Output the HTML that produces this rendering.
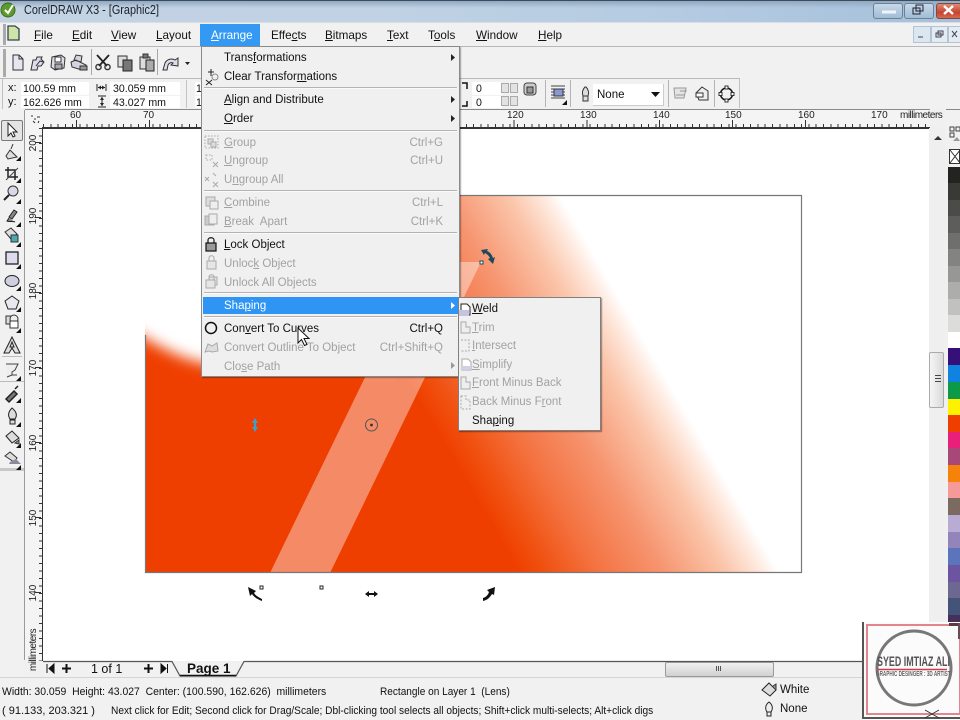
<!DOCTYPE html>
<html><head><meta charset="utf-8"><title>CorelDRAW X3</title>
<style>
html,body{margin:0;padding:0;background:#fff}
#r{position:relative;width:960px;height:720px;overflow:hidden;background:#f0f0f0;font:11.7px/14px "Liberation Sans",sans-serif;color:#111;filter:blur(.35px)}
#r div,#r span.a{position:absolute}
.t{position:absolute;white-space:pre}
.m{font-size:11.5px;line-height:14px;margin-top:1px}
.g{color:#a2a2a2}
.sep{height:1px;background:#b4b4b4;border-bottom:1px solid #fafafa}
.rn{font-size:10px;line-height:12px;color:#222;position:absolute;white-space:pre}
.v{transform:rotate(-90deg);transform-origin:center}
.p{font-size:10.6px}
svg{position:absolute;left:0;top:0}
u{text-underline-offset:1px}
</style></head><body><div id="r">

<!-- canvas -->
<div style="left:42px;top:128px;width:888px;height:533px;background:#fff"></div>
<svg width="960" height="720" viewBox="0 0 960 720">
<defs>
<linearGradient id="gr" gradientUnits="userSpaceOnUse" x1="520" y1="573" x2="714" y2="460">
<stop offset="0" stop-color="#ef3f00"/><stop offset=".1" stop-color="#f0500f"/><stop offset=".3" stop-color="#f47240"/><stop offset=".55" stop-color="#f6946f"/><stop offset=".8" stop-color="#fbc6ab"/><stop offset=".93" stop-color="#fee9de"/><stop offset="1" stop-color="#fff"/>
</linearGradient>
<filter id="bl" x="-20%" y="-20%" width="140%" height="140%"><feGaussianBlur stdDeviation="7"/></filter>
<clipPath id="lc"><rect x="145" y="195" width="250" height="378"/></clipPath>
</defs>
<rect x="145" y="195" width="657" height="378" fill="url(#gr)"/>
<g clip-path="url(#lc)"><path d="M100 150V312C150 340 175 360 215 365H420V150Z" fill="#fff" filter="url(#bl)"/></g>
<polygon points="270,573 330,573 481,262 421,262" fill="#fff" opacity=".4"/>
<path d="M145.500 335V572.500H801.500V195.500H400" fill="none" stroke="#777" stroke-width="1.200"/>
<!-- handles -->
<circle cx="371.500" cy="425" r="6" fill="none" stroke="#555" stroke-width="1"/><circle cx="371.500" cy="425" r="1.400" fill="#333"/>
<path d="M255 418l-3 5h6zM255 432l-3-5h6z" fill="#3aa0c8"/><rect x="254" y="422" width="2" height="6" fill="#3aa0c8"/>
<rect x="260" y="586" width="3" height="3" fill="#fff" stroke="#222"/><rect x="320" y="586" width="3" height="3" fill="#fff" stroke="#222"/>
<rect x="480" y="261" width="3" height="3" fill="#fff" stroke="#1c4a5c"/>
<path d="M248 587l2 9 2-2c2 3 5 5 10 7l0-2c-4-2-7-4-8-6l2-2z" fill="#111"/>
<path d="M495 587l-8 3 2 2c-1 3-3 5-6 6l0 3c5-1 7-4 9-7l2 1z" fill="#111"/>
<path d="M365 594l4-3v2h5v-2l4 3-4 3v-2h-5v2z" fill="#111"/>
<path d="M481 250l7-1-1 2c3 1 5 4 6 7l2-1-2 7-5-5 2-1c-1-2-3-4-5-5l-1 2z" fill="#1c4a5c"/>
</svg>

<!-- title bar -->
<div style="left:0;top:0;width:960px;height:22px;background:linear-gradient(90deg,#c3d3e3 0,#c0d2e4 40%,#b4cbe2 70%,#a6c0da 100%)"></div>
<div style="left:0;top:0;width:960px;height:1px;background:#3c4c5c"></div>
<div style="left:0;top:1px;width:960px;height:7px;background:linear-gradient(#90a8c0,rgba(170,195,220,0))"></div>
<span class="t" style="left:24px;top:3px;font-size:12.5px;line-height:15px;color:#1a2028;transform-origin:left top;transform:scaleX(.87)">CorelDRAW X3 - [Graphic2]</span>
<div style="left:873px;top:3px;width:28px;height:14px;background:linear-gradient(#c8d8e8,#a0bcd6);border:1px solid #6d8196;border-radius:3px"></div>
<div style="left:904px;top:3px;width:28px;height:14px;background:linear-gradient(#c8d8e8,#a0bcd6);border:1px solid #6d8196;border-radius:3px"></div>
<div style="left:936px;top:3px;width:26px;height:14px;background:linear-gradient(#dc8a78,#c8432e 60%,#d46a50);border:1px solid #7c4a44;border-radius:3px"></div>
<div style="left:0;top:22px;width:960px;height:24px;background:#f1f1f1"></div>
<div style="left:0;top:46px;width:960px;height:1px;background:#b8b8b8"></div>
<div style="left:3px;top:24px;width:3px;height:21px;background:#aaa"></div>
<div style="left:0;top:22px;width:960px;height:1px;background:#d8dee4"></div>
<svg width="960" height="720" fill="none">
<path d="M882 12h14" stroke="#eef4fa" stroke-width="3"/><rect x="913" y="8" width="7" height="6" stroke="#223" /><rect x="916" y="5" width="7" height="6" stroke="#223"/>
<path d="M944 6l9 8M953 6l-9 8" stroke="#fff" stroke-width="2.500"/>
</svg>

<!-- MDI -->
<div style="left:913px;top:26px;width:16px;height:15px;background:#dbe6f0;border:1px solid #b3c4d4"></div>
<div style="left:931px;top:26px;width:15px;height:15px;background:#e4ecf3;border:1px solid #b3c4d4"></div>
<div style="left:948px;top:26px;width:14px;height:15px;background:#e4ecf3;border:1px solid #b3c4d4"></div>
<svg width="960" height="720" fill="none" stroke="#445"><path d="M918 37h5"/><rect x="936" y="33" width="5" height="4"/><rect x="938" y="31" width="5" height="4"/><path d="M952 31l5 6M957 31l-5 6"/></svg>

<!-- menu bar -->
<div style="left:200px;top:24px;width:60px;height:22px;background:#3399f3"></div>
<span class="t" style="left:34px;top:29px"><u>F</u>ile</span>
<span class="t" style="left:72px;top:29px"><u>E</u>dit</span>
<span class="t" style="left:111px;top:29px"><u>V</u>iew</span>
<span class="t" style="left:156px;top:29px"><u>L</u>ayout</span>
<span class="t" style="left:211px;top:29px;color:#fff"><u>A</u>rrange</span>
<span class="t" style="left:271px;top:29px">Effe<u>c</u>ts</span>
<span class="t" style="left:325px;top:29px"><u>B</u>itmaps</span>
<span class="t" style="left:387px;top:29px"><u>T</u>ext</span>
<span class="t" style="left:428px;top:29px">T<u>o</u>ols</span>
<span class="t" style="left:476px;top:29px"><u>W</u>indow</span>
<span class="t" style="left:538px;top:29px"><u>H</u>elp</span>

<!-- toolbar rows -->
<div style="left:0;top:47px;width:960px;height:32px;background:#f1f1f1"></div>
<div style="left:0;top:78px;width:740px;height:1px;background:#b9b9b9"></div>
<div style="left:0;top:79px;width:960px;height:30px;background:#f1f1f1"></div>
<div style="left:3px;top:49px;width:3px;height:28px;background:#aaa"></div>
<div style="left:91px;top:49px;width:1px;height:26px;background:#a8a8a8"></div>
<div style="left:157px;top:49px;width:1px;height:26px;background:#a8a8a8"></div>
<div style="left:2px;top:79px;width:1px;height:30px;background:#c0c0c0"></div>
<div style="left:21px;top:82px;width:68px;height:13px;background:#fff"></div>
<div style="left:21px;top:96px;width:68px;height:12px;background:#fff"></div>
<div style="left:110px;top:82px;width:70px;height:13px;background:#fff"></div>
<div style="left:110px;top:96px;width:70px;height:12px;background:#fff"></div>
<div style="left:186px;top:80px;width:1px;height:28px;background:#c4c4c4"></div>
<div style="left:195px;top:82px;width:6px;height:13px;background:#fff"></div>
<div style="left:195px;top:96px;width:6px;height:12px;background:#fff"></div>
<span class="t" style="left:8px;top:81px;font-size:11px">x:</span>
<span class="t" style="left:8px;top:95px;font-size:11px">y:</span>
<span class="t p" style="left:23px;top:82px">100.59 mm</span>
<span class="t p" style="left:23px;top:96px">162.626 mm</span>
<span class="t p" style="left:113px;top:82px">30.059 mm</span>
<span class="t p" style="left:113px;top:96px">43.027 mm</span>
<span class="t p" style="left:196px;top:82px">1</span>
<span class="t p" style="left:196px;top:96px">1</span>

<div style="left:472px;top:82px;width:30px;height:13px;background:#fff"></div>
<div style="left:472px;top:96px;width:30px;height:12px;background:#fff"></div>
<span class="t p" style="left:476px;top:82px">0</span>
<span class="t p" style="left:476px;top:96px">0</span>
<div style="left:501px;top:83px;width:6px;height:8px;background:#e2e2e2;border:1px solid #aaa"></div>
<div style="left:510px;top:83px;width:6px;height:8px;background:#e2e2e2;border:1px solid #aaa"></div>
<div style="left:501px;top:96px;width:6px;height:8px;background:#e2e2e2;border:1px solid #aaa"></div>
<div style="left:510px;top:96px;width:6px;height:8px;background:#e2e2e2;border:1px solid #aaa"></div>
<div style="left:545px;top:80px;width:1px;height:27px;background:#b4b4b4"></div>
<div style="left:570px;top:80px;width:1px;height:27px;background:#b4b4b4"></div>
<div style="left:668px;top:80px;width:1px;height:27px;background:#b4b4b4"></div>
<div style="left:714px;top:80px;width:1px;height:27px;background:#b4b4b4"></div>
<div style="left:739px;top:78px;width:1px;height:30px;background:#c0c0c0"></div>
<div style="left:593px;top:84px;width:70px;height:21px;background:#fff;border-right:1px solid #ccc;border-bottom:1px solid #ccc"></div>
<span class="t" style="left:597px;top:88px;font-size:11.5px">None</span>
<svg width="960" height="720"><path d="M651 92h9l-4.500 5z" fill="#111"/></svg>

<!-- rulers -->
<div style="left:25px;top:109px;width:905px;height:1px;background:#8a8a8a"></div>
<div style="left:25px;top:110px;width:905px;height:18px;background:#f4f4f4"></div>
<div style="left:42px;top:127px;width:888px;height:1.500px;background:#333"></div>
<div style="left:43px;top:124px;width:887px;height:3px;background:repeating-linear-gradient(90deg,#333 0,#333 1px,transparent 1px,transparent 7.29px)"></div>
<div style="left:76px;top:120px;width:802px;height:7px;background:repeating-linear-gradient(90deg,#333 0,#333 1px,transparent 1px,transparent 72.9px)"></div>
<span class="rn" style="left:70px;top:110px">60</span>
<span class="rn" style="left:143px;top:110px">70</span>
<span class="rn" style="left:507px;top:110px">120</span>
<span class="rn" style="left:580px;top:110px">130</span>
<span class="rn" style="left:653px;top:110px">140</span>
<span class="rn" style="left:725px;top:110px">150</span>
<span class="rn" style="left:798px;top:110px">160</span>
<span class="rn" style="left:871px;top:110px">170</span>
<span class="rn" style="left:900px;top:110px;font-size:10px;letter-spacing:-.5px">millimeters</span>
<div style="left:24px;top:110px;width:1px;height:550px;background:#9a9a9a"></div>
<div style="left:25px;top:128px;width:17px;height:533px;background:#f4f4f4"></div>
<div style="left:41.500px;top:128px;width:1.500px;height:533px;background:#333"></div>
<div style="left:39px;top:128px;width:2.500px;height:533px;background:repeating-linear-gradient(180deg,#333 0,#333 1px,transparent 1px,transparent 7.5px)"></div>
<div style="left:35px;top:142px;width:6px;height:515px;background:repeating-linear-gradient(180deg,#333 0,#333 1px,transparent 1px,transparent 75px)"></div>
<span class="rn v" style="left:24px;top:137px;width:20px;text-align:center">200</span>
<span class="rn v" style="left:24px;top:210px;width:20px;text-align:center">190</span>
<span class="rn v" style="left:24px;top:285px;width:20px;text-align:center">180</span>
<span class="rn v" style="left:24px;top:362px;width:20px;text-align:center">170</span>
<span class="rn v" style="left:24px;top:437px;width:20px;text-align:center">160</span>
<span class="rn v" style="left:24px;top:512px;width:20px;text-align:center">150</span>
<span class="rn v" style="left:24px;top:587px;width:20px;text-align:center">140</span>
<span class="rn v" style="left:4px;top:644px;width:60px;text-align:center;letter-spacing:-.5px">millimeters</span>

<!-- toolbox -->
<div style="left:0;top:109px;width:24px;height:568px;background:#f1f1f1"></div>
<div style="left:1px;top:120px;width:20px;height:19px;background:#e4e4e4;border:1px solid #7a7a7a;border-radius:2px"></div>
<div style="left:2px;top:356px;width:20px;height:1px;background:#bbb"></div>
<div style="left:0;top:381px;width:24px;height:1px;background:#bbb"></div>
<div style="left:0;top:468px;width:24px;height:3px;background:#c8c8c8"></div>

<!-- scroll + palette -->
<div style="left:929px;top:128px;width:16px;height:533px;background:#efefef"></div>
<div style="left:929px;top:352px;width:13px;height:54px;background:linear-gradient(90deg,#f5f5f5,#dadada);border:1px solid #aaa;border-radius:2px"></div>
<div style="left:935px;top:375px;width:6px;height:1px;background:#444;box-shadow:0 3px #444,0 6px #444"></div>
<svg width="960" height="720"><path d="M934 140l4-4 4 4z" fill="#333"/></svg>
<div style="left:945px;top:109px;width:15px;height:40px;background:#f1f1f1"></div>
<div style="left:946px;top:109px;width:14px;height:1px;background:#888"></div>
<div style="left:949px;top:149px;width:11px;height:15px;background:#fff;border:1px solid #333;box-sizing:border-box"></div>
<svg width="960" height="720"><path d="M953 141l4-4 3 4z" fill="#999"/><path d="M950 150l10 13M960 150l-10 13" stroke="#333"/><path d="M950 127h4v4h-4zM950 133h4v4h-4zM956 127h4v4h-4z" fill="none" stroke="#444"/></svg>
<div style="left:948px;top:166.700px;width:12px;height:17px;background:#232321"></div>
<div style="left:948px;top:183px;width:12px;height:17px;background:#393936"></div>
<div style="left:948px;top:199.500px;width:12px;height:17px;background:#4b4b49"></div>
<div style="left:948px;top:216px;width:12px;height:17px;background:#5d5d5b"></div>
<div style="left:948px;top:232.500px;width:12px;height:17px;background:#6f6f6d"></div>
<div style="left:948px;top:249px;width:12px;height:17px;background:#838381"></div>
<div style="left:948px;top:265.500px;width:12px;height:17px;background:#979795"></div>
<div style="left:948px;top:282px;width:12px;height:17px;background:#adadab"></div>
<div style="left:948px;top:298.500px;width:12px;height:17px;background:#c1c1bf"></div>
<div style="left:948px;top:315px;width:12px;height:17px;background:#dcdcda"></div>
<div style="left:948px;top:331.500px;width:12px;height:17px;background:#fff"></div>
<div style="left:948px;top:348px;width:12px;height:17px;background:#351078"></div>
<div style="left:948px;top:365px;width:12px;height:17px;background:#1082e0"></div>
<div style="left:948px;top:382px;width:12px;height:17px;background:#0c9a48"></div>
<div style="left:948px;top:398.500px;width:12px;height:17px;background:#fff200"></div>
<div style="left:948px;top:415px;width:12px;height:17px;background:#ef3f00"></div>
<div style="left:948px;top:431.500px;width:12px;height:17px;background:#e8207a"></div>
<div style="left:948px;top:448px;width:12px;height:17px;background:#a84878"></div>
<div style="left:948px;top:465px;width:12px;height:17px;background:#f5820a"></div>
<div style="left:948px;top:481.500px;width:12px;height:17px;background:#f59a98"></div>
<div style="left:948px;top:498px;width:12px;height:17px;background:#7a6a60"></div>
<div style="left:948px;top:515px;width:12px;height:17px;background:#b8acd4"></div>
<div style="left:948px;top:531.500px;width:12px;height:17px;background:#9484bc"></div>
<div style="left:948px;top:548px;width:12px;height:17px;background:#5c74bc"></div>
<div style="left:948px;top:565px;width:12px;height:17px;background:#6c54a0"></div>
<div style="left:948px;top:581.500px;width:12px;height:17px;background:#6c6890"></div>
<div style="left:948px;top:598px;width:12px;height:17px;background:#445478"></div>
<div style="left:948px;top:614.500px;width:12px;height:17px;background:#443058"></div>

<!-- page tabs -->
<div style="left:43px;top:662px;width:887px;height:15px;background:#f1f1f1"></div>
<svg width="960" height="720">
<path d="M43 661.500H172L180 676H236L244 661.500H930" fill="none" stroke="#555" stroke-width="1.200"/>
<path d="M180 675.500H236" stroke="#111" stroke-width="1.500"/>
<path d="M47 664v9M54 664l-5 4.500 5 4.500z" stroke="#111" fill="#111"/>
<path d="M62 668.500h9M66.500 664v9M144 668.500h9M148.500 664v9" stroke="#111" stroke-width="2"/>
<path d="M161 664l5 4.500-5 4.500zM167.500 664v9" stroke="#111" fill="#111"/>
</svg>
<span class="t" style="left:91px;top:662px;font-size:12.500px">1 of 1</span>
<span class="t" style="left:187px;top:661px;font-size:13.500px;font-weight:bold;line-height:15px">Page 1</span>
<div style="left:665px;top:662px;width:107px;height:13px;background:linear-gradient(#f0f0f0,#d0d0d0);border:1px solid #9a9a9a;border-radius:2px"></div>
<div style="left:716px;top:666px;width:1px;height:5px;background:#555;box-shadow:2px 0 #555,4px 0 #555"></div>
<div style="left:0;top:677px;width:960px;height:43px;background:#f1f1f1"></div>
<div style="left:0;top:677px;width:862px;height:1px;background:#d4d4d4"></div>

<!-- status -->
<span class="t" style="left:2px;top:685px;font-size:11px;transform-origin:left top;transform:scaleX(.947)">Width: 30.059  Height: 43.027  Center: (100.590, 162.626)  millimeters</span>
<span class="t" style="left:380px;top:685px;font-size:11px;transform-origin:left top;transform:scaleX(.915)">Rectangle on Layer 1  (Lens)</span>
<span class="t" style="left:2px;top:704px;font-size:11px">( 91.133, 203.321 )</span>
<span class="t" style="left:111px;top:704px;font-size:11px;transform-origin:left top;transform:scaleX(.922)">Next click for Edit; Second click for Drag/Scale; Dbl-clicking tool selects all objects; Shift+click multi-selects; Alt+click digs</span>
<span class="t" style="left:780px;top:683px;font-size:11.500px">White</span>
<span class="t" style="left:780px;top:702px;font-size:11.500px">None</span>

<!-- main menu -->
<div style="left:201px;top:46px;width:259px;height:331px;background:#f0f0f0;border:1px solid #8a8a8a;box-sizing:border-box;box-shadow:1px 1px 1px rgba(0,0,0,.35)"></div>
<div class="sep" style="left:204px;top:87px;width:253px"></div>
<div class="sep" style="left:204px;top:130px;width:253px"></div>
<div class="sep" style="left:204px;top:190px;width:253px"></div>
<div class="sep" style="left:204px;top:232px;width:253px"></div>
<div class="sep" style="left:204px;top:292px;width:253px"></div>
<div class="sep" style="left:204px;top:316px;width:253px"></div>
<div style="left:203px;top:297px;width:255px;height:17px;background:#2f95f5"></div>
<span class="t m" style="left:224px;top:50px">Trans<u>f</u>ormations</span>
<span class="t m" style="left:224px;top:69px">Clear Transfor<u>m</u>ations</span>
<span class="t m" style="left:224px;top:92px"><u>A</u>lign and Distribute</span>
<span class="t m" style="left:224px;top:111px"><u>O</u>rder</span>
<span class="t m g" style="left:224px;top:135px"><u>G</u>roup</span>
<span class="t m g" style="left:224px;top:153px"><u>U</u>ngroup</span>
<span class="t m g" style="left:224px;top:172px">U<u>n</u>group All</span>
<span class="t m g" style="left:224px;top:195px"><u>C</u>ombine</span>
<span class="t m g" style="left:224px;top:214px"><u>B</u>reak  Apart</span>
<span class="t m" style="left:224px;top:237px"><u>L</u>ock Object</span>
<span class="t m g" style="left:224px;top:256px">Unloc<u>k</u> Object</span>
<span class="t m g" style="left:224px;top:275px">Unlock All Objects</span>
<span class="t m" style="left:224px;top:298px;color:#fff">Sha<u>p</u>ing</span>
<span class="t m" style="left:224px;top:321px">Con<u>v</u>ert To Curves</span>
<span class="t m g" style="left:224px;top:340px">Convert Outline To Ob<u>j</u>ect</span>
<span class="t m g" style="left:224px;top:359px">Clo<u>s</u>e Path</span>
<span class="t m g" style="right:517px;top:135px">Ctrl+G</span>
<span class="t m g" style="right:517px;top:153px">Ctrl+U</span>
<span class="t m g" style="right:517px;top:195px">Ctrl+L</span>
<span class="t m g" style="right:517px;top:214px">Ctrl+K</span>
<span class="t m" style="right:517px;top:321px">Ctrl+Q</span>
<span class="t m g" style="right:517px;top:340px">Ctrl+Shift+Q</span>

<!-- submenu -->
<div style="left:458px;top:297px;width:143px;height:134px;background:#f0f0f0;border:1px solid #808080;box-sizing:border-box;box-shadow:1px 1px 1px rgba(0,0,0,.4)"></div>
<span class="t m" style="left:472px;top:301px"><u>W</u>eld</span>
<span class="t m g" style="left:472px;top:320px"><u>T</u>rim</span>
<span class="t m g" style="left:472px;top:338px"><u>I</u>ntersect</span>
<span class="t m g" style="left:472px;top:357px"><u>S</u>implify</span>
<span class="t m g" style="left:472px;top:375px"><u>F</u>ront Minus Back</span>
<span class="t m g" style="left:472px;top:394px">Back Minus F<u>r</u>ont</span>
<span class="t m" style="left:472px;top:413px">Sha<u>p</u>ing</span>

<!-- icons overlay -->
<svg width="960" height="720" fill="none" stroke="#333" stroke-width="1">
<!-- app logo -->
<circle cx="8" cy="10" r="7" fill="#5f9a2e" stroke="#3d6b1a"/><path d="M5 10l3 3 5-8" stroke="#fff" stroke-width="2"/>
<path d="M8 26h7l4 3v11H8z" fill="#cfe5a8" stroke="#345" stroke-width="1.300"/>
<!-- toolbar -->
<path d="M13 55h6l4 4v11H13z" fill="#e6e6f2" stroke="#333"/><path d="M19 55v4h4"/>
<path d="M31 70l2-10h3l1-3h5l-1 2 3 3-3 4h-3l-1 4z" fill="#dcdcea" stroke="#333"/><path d="M36 66l4-5 3 1"/>
<path d="M52 57l9-2 4 3-1 10-9 2-4-3z" fill="#dcdce8" stroke="#333"/><rect x="55" y="57" width="6" height="5" fill="#fff"/><rect x="55" y="64" width="7" height="5" fill="#aaa"/>
<path d="M74 60l2-5 6 1-1 6zM71 62l5-2 10 5-4 5-10-3z" fill="#d4d4e0" stroke="#333"/><rect x="80" y="66" width="7" height="4" fill="#999"/>
<path d="M97 55l10 11M109 55L99 66" stroke="#222" stroke-width="1.800"/><circle cx="98.500" cy="67" r="2.600" stroke-width="1.400"/><circle cx="107.500" cy="67" r="2.600" stroke-width="1.400"/>
<rect x="118" y="56" width="9" height="11" fill="#ddd"/><rect x="123" y="60" width="9" height="11" fill="#777" stroke="#222"/>
<rect x="140" y="57" width="10" height="12" fill="#ddd"/><rect x="143" y="54" width="5" height="4" fill="#777"/><rect x="146" y="60" width="8" height="11" fill="#aaa" stroke="#222"/>
<path d="M163 70l2-7c2-4 7-5 10-3l3-2v8l-7-1 2-2c-2-1-4 0-5 2l-1 5z" fill="#dcdcea"/><path d="M185 62h5l-2.500 3z" fill="#222" stroke="none"/>
<!-- property icons -->
<path d="M97 84v7M106 84v7M98 87.500h7" stroke="#222"/><path d="M98 87.500l3-2v4zM105 87.500l-3-2v4z" fill="#222" stroke="none"/>
<path d="M98 96h8M98 107h8M102 97v9" stroke="#222"/><path d="M102 97l-2 3h4zM102 106l-2-3h4z" fill="#222" stroke="none"/>
<path d="M462 83h5v6M462 106h5v-5" stroke="#111" stroke-width="1.500"/>
<rect x="524" y="83" width="12" height="12" rx="3" fill="#ccc" stroke="#444"/><rect x="527" y="87" width="6" height="6" fill="#999" stroke="#333"/>
<path d="M551 86h14M551 89h14M551 92h14M551 95h14M551 98h14" stroke="#444"/><rect x="554" y="89" width="9" height="7" fill="#8a9ac8" stroke="#335"/><path d="M562 105l5-5v5z" fill="#111" stroke="none"/>
<path d="M585 87c-3 3-3 6-2 9h5c1-3 1-6-2-9zM583 96v5h5v-5" fill="#ddd"/>
<path d="M674 88h12l-2 10h-9z" fill="#e4e4e4" stroke="#999"/><path d="M680 91h7M676 95h9" stroke="#999"/>
<path d="M696 93l6-6 6 4v9h-9z" fill="#eee"/><path d="M696 93h7v4h-7z" fill="#fff"/>
<circle cx="726.500" cy="94" r="6" stroke="#111" stroke-width="1.500"/><rect x="725" y="86" width="3" height="3" fill="#fff"/><rect x="725" y="99" width="3" height="3" fill="#fff"/><rect x="719" y="92.500" width="3" height="3" fill="#fff"/><rect x="731" y="92.500" width="3" height="3" fill="#fff"/>
<!-- ruler origin -->
<path d="M31 116h2M37 117l3 0M33 121l2 2M38 123l1-2M35 118l0 2" stroke="#333"/>
<!-- toolbox -->
<path d="M8 123v13l3-3 2 4 2-1-2-4h4z" fill="#fff" stroke="#222"/>
<path d="M6 156l4-6 3 3 4 4-9 2zM11 149l2-5" fill="#ddd" stroke="#333"/>
<path d="M8 167v10h10M5 170h10v10" stroke="#222" stroke-width="1.500"/><path d="M6 180l12-12" stroke="#444"/>
<circle cx="13" cy="191" r="5" fill="#d8d8e8"/><path d="M9 195l-5 5" stroke="#222" stroke-width="2"/>
<path d="M14 210l3 2-5 7-3-2zM9 218l-2 3c2 1 6 0 8 1" fill="#888" stroke="#222"/>
<path d="M5 232l6-4 6 6-6 5z" fill="#ddd"/><rect x="11" y="235" width="7" height="7" fill="#4ba8b0"/>
<rect x="6" y="252" width="12" height="12" fill="#dcdcec" stroke="#222" stroke-width="1.300"/>
<ellipse cx="12" cy="281" rx="7" ry="5.500" fill="#cfcfe0" stroke="#222"/>
<path d="M12 296l7 5-3 8H8l-3-8z" fill="#e8e8f0" stroke="#222"/>
<rect x="6" y="316" width="8" height="8" fill="#ddd"/><circle cx="14" cy="319" r="4" fill="#eee"/><rect x="10" y="321" width="8" height="7" fill="#fff"/>
<path d="M12 337l-8 16h5l3-5 3 5h5zM12 342l-2 5h4z" fill="#ddd" stroke="#222"/>
<path d="M6 364h12l-3 6-3 2v3l-5 2M12 372v3h5" fill="#eee" stroke="#444"/>
<path d="M6 399l8-8 3 3-8 8zM15 389l3-3" stroke="#222" stroke-width="1.500" fill="#777"/>
<path d="M12 408c-4 4-4 8-2 11h5c2-3 2-7-3-11zM10 420v4h5v-4z" fill="#ddd" stroke="#222"/>
<path d="M6 436l6-5 7 7-7 5z" fill="#ddd" stroke="#222"/><path d="M15 443l4-3v4z" fill="#999"/>
<path d="M5 456l5-4 7 6-3 4z" fill="#ddd" stroke="#333"/><path d="M10 462l6-3 5 5H9z" fill="#8a8a9a" stroke="none"/>
<!-- flyout triangles -->
<path d="M21 156v5h-5zM21 178v5h-5zM21 199v5h-5zM21 222v5h-5zM21 242v5h-5zM21 264v5h-5zM21 286v5h-5zM21 307v5h-5zM21 328v5h-5zM21 376v5h-5zM21 398v5h-5zM21 422v5h-5zM21 443v5h-5zM21 465v5h-5z" fill="#111" stroke="none"/>
<!-- menu arrows -->
<path d="M451 54l4 3.500-4 3.500zM451 96l4 3.500-4 3.500zM451 115l4 3.500-4 3.500z" fill="#222" stroke="none"/>
<path d="M451 302l4 3.500-4 3.500z" fill="#fff" stroke="none"/><path d="M451 362l4 3.500-4 3.500z" fill="#999" stroke="none"/>
<!-- menu icons -->
<path d="M208 72h6M211 69v7M206 80l6 5M212 80l-6 5" stroke="#222"/><circle cx="215" cy="77" r="3" stroke="#888"/>
<g stroke="#aaa"><rect x="205" y="136" width="13" height="12" stroke-dasharray="1.500 1.500"/><rect x="208" y="139" width="5" height="5" fill="#ddd"/><rect x="211" y="142" width="5" height="5" fill="#ddd"/>
<rect x="206" y="155" width="6" height="5" stroke-dasharray="1.500 1.500"/><path d="M213 162l5 5M218 162l-5 5"/>
<path d="M205 177l4 4M209 177l-4 4M213 173l3 3M213 182l5 5M218 182l-5 5"/>
<rect x="206" y="197" width="9" height="9" fill="#ddd"/><rect x="210" y="201" width="8" height="8" fill="#eee"/>
<rect x="205" y="216" width="9" height="9" fill="#ccc"/><rect x="209" y="214" width="8" height="10" fill="#eee"/>
<rect x="207" y="261" width="9" height="8" fill="#e6e6e6"/><path d="M209 261v-3c0-3 5-3 5 0v3"/>
<rect x="209" y="277" width="8" height="8" fill="#e6e6e6"/><rect x="206" y="280" width="9" height="8" fill="#e6e6e6"/><path d="M209 280v-3c0-3 5-3 5 0v3"/>
<path d="M205 352l3-8 4 2 5-3 1 8-6 1-3-1z" fill="#ddd"/></g>
<rect x="206" y="243" width="10" height="8" fill="#999" stroke="#111" stroke-width="1.200"/><path d="M208 243v-3c0-3 6-3 6 0v3" stroke="#111" stroke-width="1.200"/>
<circle cx="211" cy="328" r="5.500" stroke="#111" stroke-width="1.500"/>
<!-- submenu icons -->
<path d="M461 304h6l3 3v8h-9z" fill="#fff" stroke="#222"/><rect x="459" y="310" width="10" height="6" fill="#c4c4e0" stroke="none"/>
<g stroke="#aaa"><path d="M461 322h5v5h4v6h-9z" fill="#eee"/><path d="M461 340h8v11h-8" stroke-dasharray="2 1.500"/>
<path d="M462 359h6l3 3v8h-9z" fill="#fff"/><rect x="462" y="366" width="8" height="4" fill="#d0d0e6" stroke="none"/>
<path d="M461 377h5v5h4v7h-9z" fill="#eee"/><path d="M461 396h5v4h4v9h-9z" stroke-dasharray="2 1.500"/></g>
<path d="M298 328v15l3.500-3.500 3 6 2.500-1-3-6h5z" fill="#fff" stroke="#111"/>
<!-- status icons -->
<path d="M762 690l7-7 7 7-6 6z" fill="#ddd" stroke="#222"/><path d="M773 686l3-2v6" fill="#999"/>
<path d="M769 702c-4 3-4 7-2 10h4c2-3 2-7-2-10zM767 712v4h4v-4z" fill="#eee" stroke="#222"/>
</svg>

<!-- watermark -->
<div style="left:862px;top:622px;width:98px;height:98px;background:#fbfbfb"></div>
<div style="left:862px;top:622px;width:2px;height:97px;background:#555"></div>
<div style="left:862px;top:716.500px;width:98px;height:2px;background:#555"></div>
<div style="left:866px;top:624px;width:91px;height:87px;border:2.500px solid #e2858e;box-sizing:content-box"></div>
<div style="left:949px;top:623px;width:11px;height:3px;background:#5a3a44"></div>
<div style="left:958px;top:623px;width:2px;height:16px;background:#6a4a54"></div>
<svg width="960" height="720" fill="none">
<circle cx="914" cy="668" r="37" stroke="#777" stroke-width="3"/>
<path d="M877 669.500H947" stroke="#d03a4a" stroke-width="1.500"/>
<path d="M925 710l14 8M939 710l-14 8" stroke="#333"/>
</svg>
<span class="t" style="left:877px;top:654px;font-size:13.500px;line-height:15px;font-weight:bold;color:#555;transform-origin:left top;transform:scaleX(.66)">SYED IMTIAZ ALI</span>
<span class="t" style="left:876px;top:671px;font-size:7px;line-height:8px;font-weight:bold;color:#666;transform-origin:left top;transform:scaleX(.66)">GRAPHIC DESINGER : 3D ARTIST</span>

</div></body></html>
